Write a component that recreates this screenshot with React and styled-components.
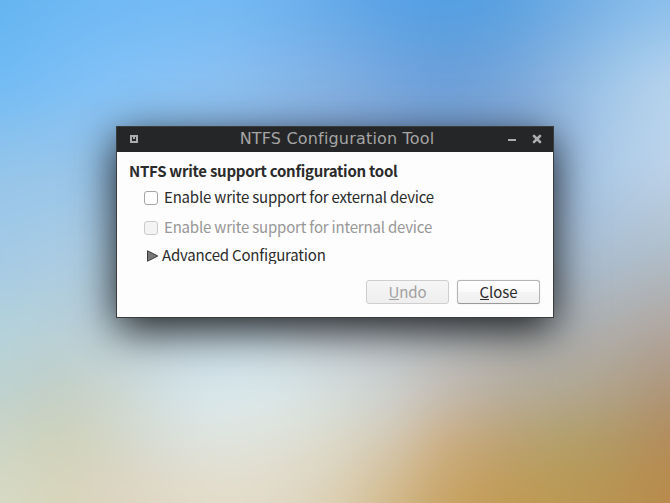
import React from "react";
import styled, { createGlobalStyle, css } from "styled-components";

const GlobalStyle = createGlobalStyle`
  html, body { margin: 0; padding: 0; overflow: hidden; }
  *, *::before, *::after { box-sizing: border-box; }
`;

/* Wallpaper: rows of colour stops, each row fading into the next one.
   It overscans the desktop by BLEED so that its blur has clean edges. */
const BLEED = 80;
const wallpaperRows = [
  { y: 0, colors: "64b4f0 6bb7f3 70b9f5 72baf5 72b9f4 6db3f0 64aaea 58a3e6 529fe3 58a1e2 6aaae3 7db5e8 8abfec" },
  { y: 84, colors: "71bbf5 7bbff6 83c2f7 88c2f5 8cc1f2 88b9ea 83b0e2 76a6dd 6d9fd8 76a5d9 8db4df a3c9e9 b8d4ed" },
  { y: 168, colors: "94c5ea 97c5ea 98c3e8 96bfe4 93b8e0 90b3de 8fb0dc 8dadd9 88a9d6 8dadd9 9cbde2 b0cde9 bdd3ea" },
  { y: 252, colors: "a3c9e6 a9cce4 adcce2 b0cadf b0c8de b0c4da adbfd5 abbad0 a8b5cc a8b8d0 a8bfd6 acc0d3 b0bec9" },
  { y: 335, colors: "b5d3db b8cfd6 bfd2d9 c4d6e0 c8dbe6 cadae4 c8d2d9 c2cad0 b9bfc4 b2b6b9 afb1b3 afaca8 b0a39a" },
  { y: 400, colors: "bfd2cd c5cfc3 ccd6cd d4e2e4 dbeaed dbe8e8 d6dedb ced1ce c5baae b8ac99 b2a78f b0a083 ae9272" },
  { y: 440, colors: "cdd5c6 cfd2ba d4d6c6 dadfd8 e0e4dd e0e1d8 dcdaca d4c9b4 ccae82 bda273 b3a068 b29963 b38b58" },
  { y: 503, colors: "d7dac4 d9d5bb ddd4bf e2d8c4 e4dcc8 e1d8c4 dccfb2 d3b889 c7a262 c29b53 bc9852 b9934f b98a4a" },
].map((row) => ({ ...row, colors: row.colors.split(" ") }));

const stops = (colors) =>
  colors.map((c, i) => `#${c} ${BLEED + (i * 670) / (colors.length - 1)}px`).join(", ");

const Desktop = styled.main`
  display: grid;
  grid-template: 503px / 670px;
  width: 670px;
  height: 503px;
  overflow: hidden;
  & > * { grid-area: 1 / 1; }
`;

const Wallpaper = styled.div`
  display: grid;
  margin: -${BLEED}px;
  filter: blur(18px);
  & > * { grid-area: 1 / 1; }
`;

const WallpaperLayer = styled.div`
  background: linear-gradient(to right, ${(p) => stops(p.$colors)});
  ${(p) =>
    p.$to > 0 &&
    css`mask-image: linear-gradient(to bottom, transparent ${p.$from + BLEED}px, #000 ${p.$to + BLEED}px);`}
`;

const Window = styled.section`
  display: flex;
  flex-direction: column;
  width: 438px;
  height: 192px;
  margin: 126px 0 0 116px;
  border: 1px solid #3a3b3b;
  background: #fdfdfd;
  box-shadow: 0 12px 40px rgba(0, 0, 0, 0.86);
  color: #2b2b2b;
  font: 15px/24px "Noto Sans CJK SC", sans-serif;
  letter-spacing: -0.19px;
  z-index: 1;
`;

const TitleBar = styled.header`
  display: grid;
  grid-template-columns: 82px 1fr 82px;
  align-items: center;
  height: 25px;
  flex: none;
  padding: 0 11px 0 12px;
  background: #252628;
  color: #a5a5a5;
`;

const Title = styled.h1`
  margin: 0 0 1px 3px;
  text-align: center;
  white-space: nowrap;
  font: 400 16px/24px "DejaVu Sans", sans-serif;
  letter-spacing: 0.18px;
`;

const Controls = styled.div`
  display: flex;
  justify-content: flex-end;
  gap: 15px;
`;

const ControlIcon = styled.svg`
  display: block;
  width: 10px;
  height: 11px;
`;

const Content = styled.div`
  display: flex;
  flex-direction: column;
  padding: 7px 13px 0 12px;
`;

const Heading = styled.h2`
  margin: 0;
  font-size: 15px;
  line-height: 24px;
  font-weight: 700;
  letter-spacing: -0.27px;
  white-space: nowrap;
`;

const Option = styled.label`
  display: flex;
  align-items: center;
  gap: 6px;
  height: 24px;
  margin: ${(p) => p.$top}px 0 0 15px;
  white-space: nowrap;
  color: ${(p) => (p.$disabled ? "#979797" : "inherit")};
`;

const CheckBox = styled.input`
  appearance: none;
  flex: none;
  width: 14px;
  height: 14px;
  margin: 2px 0 0;
  border: 1px solid #a5a5a5;
  border-radius: 3px;
  background: #fff;
  &:disabled { border-color: #cacaca; background: #f3f3f3; }
`;

const Expander = styled.div`
  display: flex;
  align-items: center;
  gap: 3px;
  height: 24px;
  margin: 4px 0 0 18px;
  white-space: nowrap;
`;

const Arrow = styled.svg`
  display: block;
  width: 12px;
  height: 12px;
  margin-top: 2px;
`;

const ExpanderLabel = styled.span`
  align-self: flex-start;
  height: 21px;
  overflow: hidden;
`;

const Actions = styled.footer`
  display: flex;
  justify-content: flex-end;
  gap: 8px;
  margin-top: 13px;
`;

const Button = styled.button`
  display: flex;
  justify-content: center;
  width: 83px;
  height: 24px;
  padding: 0;
  border: 1px solid #b4b4b4;
  border-bottom-color: #999;
  border-radius: 3px;
  background: linear-gradient(#fff, #fafafa 50%, #f4f4f4 51%, #efefef);
  box-shadow: 0 0 1px rgba(0, 0, 0, 0.25);
  color: #2b2b2b;
  font: inherit;
  letter-spacing: -0.1px;
  line-height: 21px;
  &:disabled {
    border-color: #cecece;
    background: linear-gradient(#f6f6f6, #f2f2f2 50%, #eee);
    box-shadow: none;
    color: #a0a0a0;
  }
`;

const Mnemonic = styled.span`
  height: 19px;
  border-bottom: 1px solid currentColor;
`;

export default function App() {
  return (
    <>
      <GlobalStyle />
      <Desktop>
        <Wallpaper>
          {wallpaperRows.map((row, i) => (
            <WallpaperLayer
              key={row.y}
              $colors={row.colors}
              $from={i ? wallpaperRows[i - 1].y : 0}
              $to={row.y}
            />
          ))}
        </Wallpaper>
        <Window>
          <TitleBar>
            <ControlIcon viewBox="0 0 10 11" aria-label="Window menu">
              <path fill="#acacac" fillRule="evenodd" d="M1 1h8v8H1zM3 3v4h4V3H6v2H4V3z" />
            </ControlIcon>
            <Title>NTFS Configuration Tool</Title>
            <Controls>
              <ControlIcon viewBox="0 0 10 11" aria-label="Minimize">
                <path fill="#acacac" d="M1 5h8v2H1z" />
              </ControlIcon>
              <ControlIcon viewBox="0 0 10 11" aria-label="Close">
                <path fill="#acacac" d="M1 1h2v1h1v1h2V2h1V1h2v2H8v1H7v2h1v1h1v2H7V8H6V7H4v1H3v1H1V7h1V6h1V4H2V3H1z" stroke="#acacac" strokeWidth=".4" />
              </ControlIcon>
            </Controls>
          </TitleBar>
          <Content>
            <Heading>NTFS write support configuration tool</Heading>
            <Option $top={2}>
              <CheckBox type="checkbox" />
              Enable write support for external device
            </Option>
            <Option $top={6} $disabled>
              <CheckBox type="checkbox" disabled />
              Enable write support for internal device
            </Option>
            <Expander>
              <Arrow viewBox="0 0 12 12">
                <path d="M.5 .8v10.4L10.8 6z" fill="#777" stroke="#3c3c3c" />
              </Arrow>
              <ExpanderLabel>Advanced Configuration</ExpanderLabel>
            </Expander>
            <Actions>
              <Button disabled><Mnemonic>U</Mnemonic>ndo</Button>
              <Button><Mnemonic>C</Mnemonic>lose</Button>
            </Actions>
          </Content>
        </Window>
      </Desktop>
    </>
  );
}
